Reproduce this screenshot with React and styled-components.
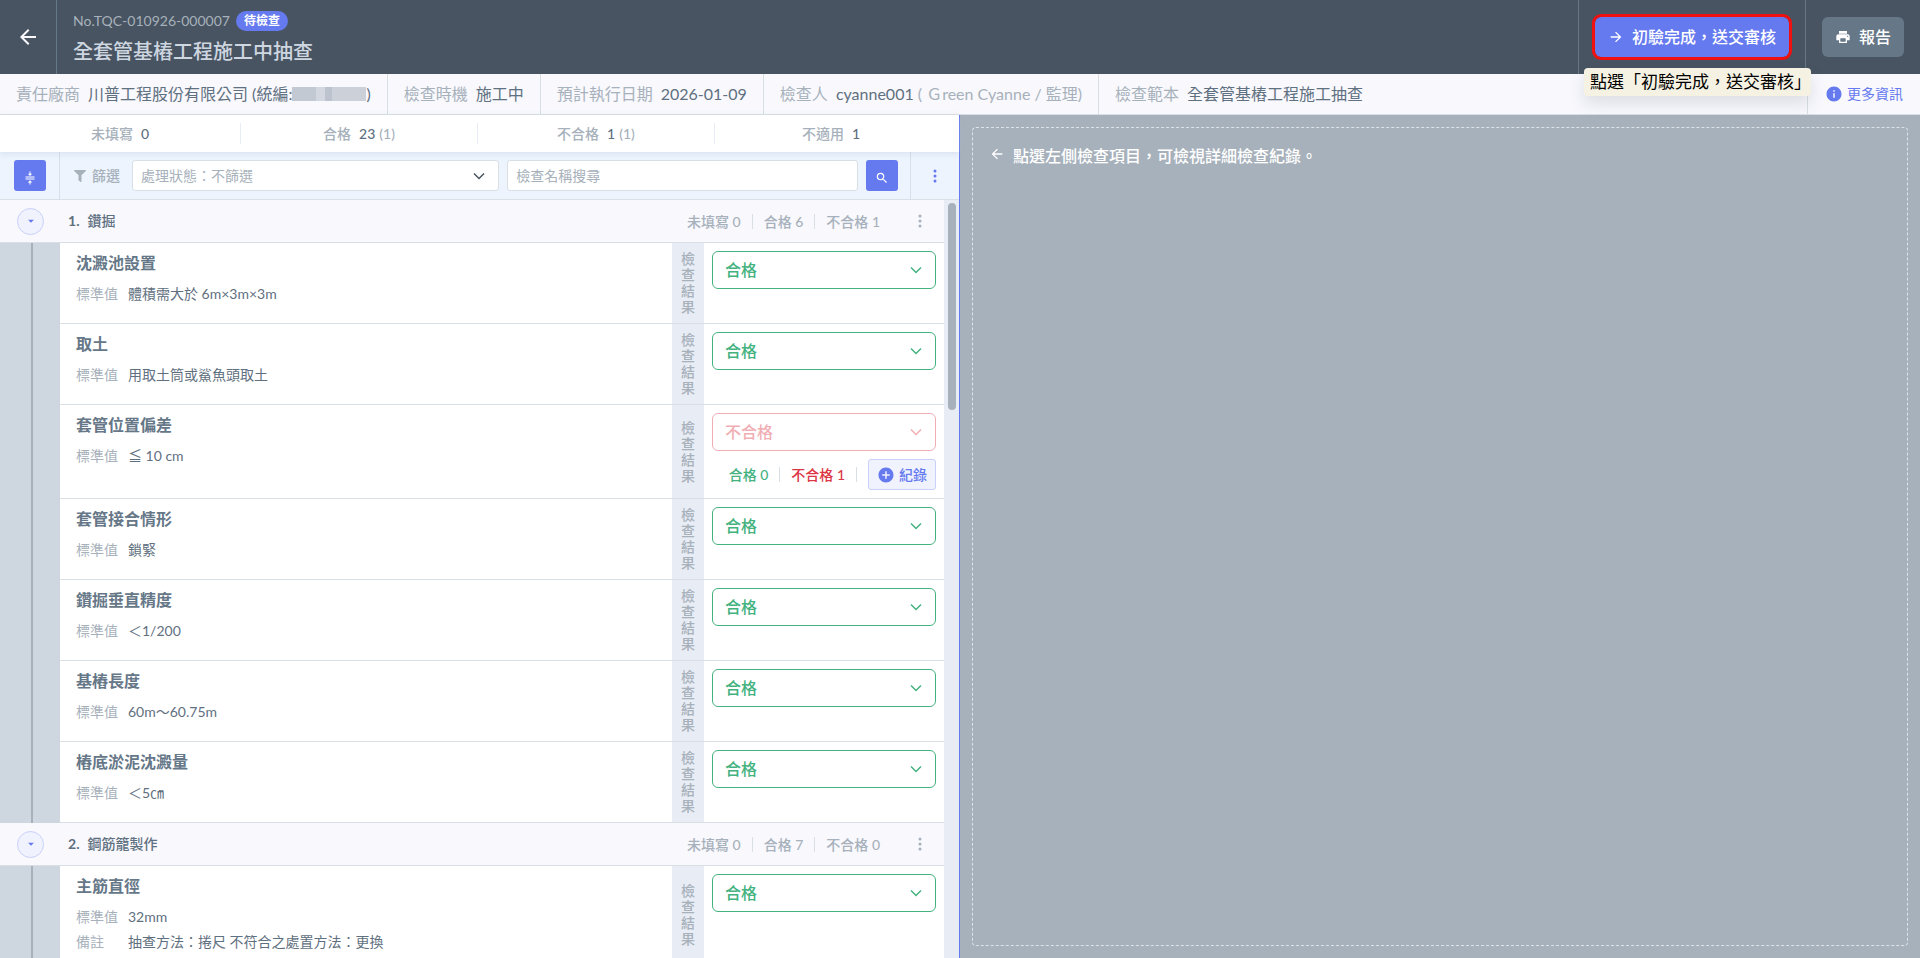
import React from 'react'
import styled, { createGlobalStyle } from 'styled-components'
import { MdArrowBack, MdArrowForward, MdPrint, MdInfo, MdAddCircle, MdSearch, MdArrowDropDown } from 'react-icons/md'
import { FaFilter } from 'react-icons/fa'

const colors = {
  dark: '#485461',
  slate: '#667788',
  text: '#5f7080',
  muted: '#a7b1bb',
  line: '#d8dfe5',
  rail: '#ced6e0',
  strip: '#e8ecf4',
  light: '#f8f8fd',
  filter: '#edf4fe',
  primary: '#667aef',
  green: '#44b27f',
  red: '#dc3545',
}

const GlobalStyle = createGlobalStyle`
  * {
    box-sizing: border-box;
  }

  body {
    margin: 0;
    color: ${colors.text};
    font: 14px/20px Lato, "Noto Sans CJK TC", sans-serif;
  }

  button, input, select {
    font: inherit;
    margin: 0;
  }

  h1, h2, h3, p, dl, dt, dd, ul {
    font: inherit;
    margin: 0;
    padding: 0;
  }
`

const Page = styled.div`
  display: flex;
  flex-direction: column;
  height: 100vh;
  overflow: hidden;
`

const Header = styled.header`
  background-color: ${colors.dark};
  display: flex;
  flex: none;
  height: 74px;
`

const BackButton = styled.button`
  align-items: center;
  background: none;
  border: 0;
  border-right: 1px solid ${colors.slate};
  color: ${colors.light};
  display: flex;
  font-size: 24px;
  justify-content: center;
  width: 57px;
`

const Heading = styled.div`
  flex: 1;
  padding: 9px 16px;
`

const SerialLine = styled.div`
  align-items: center;
  color: ${colors.muted};
  display: flex;
  gap: 6px;
  height: 24px;
`

const Badge = styled.span`
  background-color: ${colors.primary};
  border-radius: 10px;
  color: white;
  font-size: 12px;
  font-weight: 700;
  padding: 0 8px;
`

const Title = styled.h1`
  color: ${colors.rail};
  font-size: 20px;
  font-weight: 500;
  line-height: 36px;
`

const HeaderCell = styled.div`
  align-items: center;
  border-left: 1px solid ${colors.slate};
  display: flex;
  padding: 0 16px;
  position: relative;
`

const HeaderButton = styled.button`
  align-items: center;
  background-color: ${props => props.$primary ? colors.primary : colors.slate};
  border: 0;
  border-radius: 6px;
  color: white;
  display: flex;
  font-size: 16px;
  font-weight: 500;
  gap: 8px;
  height: 40px;
  outline: ${props => props.$primary ? '3px solid #f01010' : 'none'};
  padding: 0 13px;
`

const Tooltip = styled.div`
  background-color: #f5f2e4;
  border-radius: 4px;
  box-shadow: 0 8px 16px rgba(72, 84, 96, .15);
  color: black;
  font-size: 17px;
  left: 5px;
  line-height: 28px;
  padding: 0 0 0 6px;
  position: absolute;
  top: 68px;
  white-space: nowrap;
  z-index: 2;
`

const InfoBar = styled.dl`
  background-color: ${colors.light};
  border-bottom: 1px solid ${colors.line};
  display: flex;
  flex: none;
  font-size: 16px;
  height: 41px;
`

const InfoCell = styled.div`
  align-items: center;
  border-right: ${props => props.$last ? 0 : 1}px solid ${colors.line};
  display: flex;
  flex: ${props => props.$last ? 1 : 'none'};
  gap: 8px;
  padding: 0 16px;
  white-space: nowrap;
`

const Term = styled.dt`
  color: ${colors.muted};
`

const Detail = styled.dd`
  align-items: center;
  display: flex;
`

const Aside = styled.span`
  color: ${colors.muted};
  white-space: pre;
`

const Redacted = styled.span`
  background: linear-gradient(90deg, #c3c9d3 0 33%, #d3d8e0 33% 45%, #bcc3ce 45% 54%, #cbd0d9 54%);
  height: 14px;
  width: 74px;
`

const MoreLink = styled.a`
  align-items: center;
  border-left: 1px solid ${colors.line};
  color: ${colors.primary};
  display: flex;
  font-size: 14px;
  gap: 4px;
  padding: 0 17px;
  text-decoration: none;
`

const Main = styled.main`
  display: flex;
  flex: 1;
  min-height: 0;
`

const LeftPane = styled.section`
  border-right: 1px solid ${colors.primary};
  display: flex;
  flex-direction: column;
  width: 50%;
`

const RightPane = styled.section`
  background-color: ${colors.muted};
  display: flex;
  padding: 12px;
  width: 50%;
`

const Placeholder = styled.div`
  border: 1px dashed #dde3e9;
  border-radius: 4px;
  color: white;
  display: flex;
  flex: 1;
  font-size: 16px;
  font-weight: 500;
  gap: 8px;
  line-height: 24px;
  padding: 16px;

  svg {
    margin-top: 2px;
  }
`

const Stats = styled.ul`
  box-shadow: 0 2px 6px rgba(166, 183, 204, .3);
  display: flex;
  flex: none;
  height: 37px;
  line-height: 22px;
  list-style: none;
  padding: 8px 8px 8px 4px;
  position: relative;
`

const Stat = styled.li`
  border-right: 1px solid ${colors.strip};
  color: ${colors.muted};
  flex: 1;
  font-weight: 500;
  text-align: center;

  &:last-child {
    border-right: 0;
  }
`

const Count = styled.span`
  color: ${colors.text};
  margin: 0 4px 0 8px;
`

const FilterBar = styled.form`
  background-color: ${colors.filter};
  border-bottom: 1px solid ${colors.line};
  display: flex;
  flex: none;
  height: 48px;
`

const FilterSide = styled.div`
  align-items: center;
  border: 0 solid ${colors.line};
  border-${props => props.$side}-width: 1px;
  display: flex;
  justify-content: center;
  width: ${props => props.$side === 'right' ? 60 : 49}px;
`

const FilterFields = styled.div`
  align-items: center;
  display: grid;
  flex: 1;
  gap: 8px;
  grid-template-columns: auto minmax(0, 22fr) minmax(0, 21fr) auto;
  padding: 0 12px 0 14px;
`

const FilterLabel = styled.label`
  align-items: center;
  color: ${colors.muted};
  display: flex;
  font-weight: 500;
  gap: 6px;
  margin-right: 4px;
`

const IconButton = styled.button`
  align-items: center;
  background-color: ${colors.primary};
  border: 0;
  border-radius: 3px;
  color: white;
  display: flex;
  flex: none;
  height: 31px;
  justify-content: center;
  padding: 4px 0 0;
  width: 32px;
`

const SelectBox = styled.div`
  color: ${props => props.$color};
  display: flex;
  opacity: ${props => props.$faded ? .4 : 1};
  position: relative;

  svg {
    pointer-events: none;
    position: absolute;
    right: 14px;
    top: calc(50% - 6px);
  }
`

const FilterSelect = styled.select`
  appearance: none;
  background-color: white;
  border: 1px solid ${colors.line};
  border-radius: 3px;
  color: ${colors.muted};
  height: 31px;
  padding: 0 8px;
  width: 100%;
`

const SearchInput = styled.input`
  background-color: white;
  border: 1px solid ${colors.line};
  border-radius: 3px;
  height: 31px;
  padding: 0 8px;

  &::placeholder {
    color: ${colors.muted};
  }
`

const ResultSelect = styled.select`
  appearance: none;
  background-color: white;
  border: 1px solid currentColor;
  border-radius: 6px;
  color: inherit;
  font-size: 16px;
  font-weight: 500;
  height: 38px;
  opacity: 1;
  padding: 0 12px;
  width: 100%;
`

const KebabButton = styled.button`
  background: none;
  border: 0;
  color: ${props => props.$color};
  display: flex;
  padding: 0;
`

const ScrollArea = styled.div`
  display: flex;
  flex: 1;
  min-height: 0;
`

const List = styled.div`
  flex: 1;
  overflow: hidden;
`

const Track = styled.div`
  background-color: ${colors.strip};
  padding: 3px 3px 0 4px;
  width: 15px;
`

const Thumb = styled.div`
  background-color: ${colors.muted};
  border-radius: 4px;
  height: 207px;
`

const GroupHeader = styled.header`
  align-items: center;
  background-color: ${colors.light};
  border-bottom: 1px solid ${colors.line};
  display: flex;
  height: 43px;
  padding: 0 22px 0 17px;
`

const ToggleButton = styled.button`
  align-items: center;
  background-color: #f0f2fe;
  border: 1px solid #c9d0fa;
  border-radius: 50%;
  color: ${colors.primary};
  display: flex;
  height: 27px;
  justify-content: center;
  margin-right: 24px;
  padding: 0;
  width: 27px;
`

const GroupName = styled.h2`
  flex: 1;
  font-weight: 500;
`

const GroupNumber = styled.span`
  font-weight: 700;
  margin-right: 8px;
`

const Tally = styled.span`
  border-right: 1px solid ${colors.line};
  color: ${props => props.$color || colors.muted};
  font-weight: 500;
  line-height: 15px;
  margin-right: 11px;
  padding-right: 11px;

  &:last-of-type {
    border-right-width: ${props => props.$closed ? 1 : 0}px;
    margin-right: ${props => props.$closed ? 11 : 27}px;
  }
`

const GroupBody = styled.div`
  display: flex;
`

const Rail = styled.div`
  background: linear-gradient(${colors.muted}, ${colors.muted}) 31px 0 / 2px 100% no-repeat ${colors.rail};
  flex: none;
  width: 60px;
`

const Items = styled.div`
  flex: 1;
`

const Item = styled.article`
  border-bottom: 1px solid ${colors.line};
  display: flex;
`

const ItemText = styled.div`
  flex: 1;
  padding: 8px 16px 10px;
`

const ItemTitle = styled.h3`
  color: ${colors.slate};
  font-size: 16px;
  font-weight: 700;
  line-height: 24px;
  margin-bottom: 6px;
`

const ItemMeta = styled.p`
  color: ${colors.text};
  display: flex;
  line-height: 25px;
`

const MetaLabel = styled.span`
  color: ${colors.muted};
  width: 52px;
`

const Strip = styled.div`
  align-items: center;
  background-color: ${colors.strip};
  color: ${colors.muted};
  display: flex;
  font-weight: 500;
  line-height: 16px;
  padding: 8px 9px;
  text-align: center;
  width: 32px;
`

const Result = styled.div`
  display: flex;
  flex-direction: column;
  gap: 8px;
  padding: 8px;
  width: 240px;
`

const Records = styled.div`
  align-items: center;
  display: flex;
  justify-content: flex-end;
`

const RecordButton = styled.button`
  align-items: center;
  background-color: #f0f2fe;
  border: 1px solid #c9d0fa;
  border-radius: 3px;
  color: ${colors.primary};
  display: flex;
  font-weight: 500;
  gap: 4px;
  height: 31px;
  padding: 0 8px;
`

const Chevron = () => (
  <svg width="12" height="12" viewBox="0 0 12 12" fill="none" stroke="currentColor" strokeWidth="1.5">
    <path d="M1 3.5l5 5 5-5" />
  </svg>
)

const Dots = () => (
  <svg width="4" height="14" viewBox="0 0 4 14" fill="currentColor">
    <circle cx="2" cy="2" r="1.5" />
    <circle cx="2" cy="7" r="1.5" />
    <circle cx="2" cy="12" r="1.5" />
  </svg>
)

const Collapse = () => (
  <svg width="10" height="14" viewBox="0 0 10 14" fill="currentColor">
    <path d="M4.500 0.500h1v2.300h1.700L5 5 2.800 2.800h1.700zM0.500 5.600h9v1H0.500zM0.500 7.600h9v1H0.500zM5 9.200l2.200 2.200H5.500v2.100h-1v-2.100H2.800z" />
  </svg>
)

const groups = [
  {
    name: '鑽掘',
    tallies: ['未填寫 0', '合格 6', '不合格 1'],
    items: [
      { title: '沈澱池設置', standard: '體積需大於 6m×3m×3m' },
      { title: '取土', standard: '用取土筒或鯊魚頭取土' },
      { title: '套管位置偏差', standard: '≦ 10 cm', failed: true },
      { title: '套管接合情形', standard: '鎖緊' },
      { title: '鑽掘垂直精度', standard: '＜1/200' },
      { title: '基樁長度', standard: '60m～60.75m' },
      { title: '樁底淤泥沈澱量', standard: '＜5㎝' },
    ],
  },
  {
    name: '鋼筋籠製作',
    tallies: ['未填寫 0', '合格 7', '不合格 0'],
    items: [
      { title: '主筋直徑', standard: '32mm', note: '抽查方法：捲尺 不符合之處置方法：更換' },
    ],
  },
]

const stats = [
  { label: '未填寫', count: 0 },
  { label: '合格', count: 23, extra: '(1)' },
  { label: '不合格', count: 1, extra: '(1)' },
  { label: '不適用', count: 1 },
]

const CheckItem = ({ title, standard, note, failed }) => (
  <Item>
    <ItemText>
      <ItemTitle>{title}</ItemTitle>
      <ItemMeta><MetaLabel>標準值</MetaLabel>{standard}</ItemMeta>
      {note && <ItemMeta><MetaLabel>備註</MetaLabel>{note}</ItemMeta>}
    </ItemText>
    <Strip>檢查結果</Strip>
    <Result>
      <SelectBox $color={failed ? colors.red : colors.green} $faded={failed}>
        <ResultSelect aria-label={title} defaultValue={failed ? '不合格' : '合格'} disabled={failed}>
          <option>合格</option>
          <option>不合格</option>
        </ResultSelect>
        <Chevron />
      </SelectBox>
      {failed && (
        <Records>
          <Tally $color={colors.green}>合格 0</Tally>
          <Tally $color={colors.red} $closed>不合格 1</Tally>
          <RecordButton type="button"><MdAddCircle size={18} />紀錄</RecordButton>
        </Records>
      )}
    </Result>
  </Item>
)

const Group = ({ index, name, tallies, items }) => (
  <section>
    <GroupHeader>
      <ToggleButton type="button" aria-label={name}><MdArrowDropDown size={14} /></ToggleButton>
      <GroupName><GroupNumber>{index}.</GroupNumber>{name}</GroupName>
      {tallies.map(tally => <Tally key={tally}>{tally}</Tally>)}
      <KebabButton type="button" aria-label="選單" $color={colors.muted}><Dots /></KebabButton>
    </GroupHeader>
    <GroupBody>
      <Rail />
      <Items>
        {items.map(item => <CheckItem key={item.title} {...item} />)}
      </Items>
    </GroupBody>
  </section>
)

export default () => (
  <Page>
    <GlobalStyle />
    <Header>
      <BackButton type="button" aria-label="返回"><MdArrowBack /></BackButton>
      <Heading>
        <SerialLine>No.TQC-010926-000007 <Badge>待檢查</Badge></SerialLine>
        <Title>全套管基樁工程施工中抽查</Title>
      </Heading>
      <HeaderCell>
        <HeaderButton type="button" $primary><MdArrowForward size={16} />初驗完成，送交審核</HeaderButton>
        <Tooltip role="tooltip">點選「初驗完成，送交審核」</Tooltip>
      </HeaderCell>
      <HeaderCell>
        <HeaderButton type="button"><MdPrint size={16} />報告</HeaderButton>
      </HeaderCell>
    </Header>
    <InfoBar>
      <InfoCell>
        <Term>責任廠商</Term>
        <Detail>川普工程股份有限公司 (統編:<Redacted />)</Detail>
      </InfoCell>
      <InfoCell><Term>檢查時機</Term><Detail>施工中</Detail></InfoCell>
      <InfoCell><Term>預計執行日期</Term><Detail>2026-01-09</Detail></InfoCell>
      <InfoCell>
        <Term>檢查人</Term>
        <Detail>cyanne001<Aside> ( Ｇreen Cyanne / 監理)</Aside></Detail>
      </InfoCell>
      <InfoCell $last><Term>檢查範本</Term><Detail>全套管基樁工程施工抽查</Detail></InfoCell>
      <MoreLink href="#more"><MdInfo size={18} />更多資訊</MoreLink>
    </InfoBar>
    <Main>
      <LeftPane>
        <Stats>
          {stats.map(({ label, count, extra }) => (
            <Stat key={label}>{label}<Count>{count}</Count>{extra}</Stat>
          ))}
        </Stats>
        <FilterBar>
          <FilterSide $side="right">
            <IconButton type="button" aria-label="收合"><Collapse /></IconButton>
          </FilterSide>
          <FilterFields>
            <FilterLabel htmlFor="status"><FaFilter size={12} />篩選</FilterLabel>
            <SelectBox $color={colors.dark}>
              <FilterSelect id="status">
                <option>處理狀態：不篩選</option>
              </FilterSelect>
              <Chevron />
            </SelectBox>
            <SearchInput aria-label="檢查名稱搜尋" placeholder="檢查名稱搜尋" />
            <IconButton type="button" aria-label="搜尋"><MdSearch size={14} /></IconButton>
          </FilterFields>
          <FilterSide $side="left">
            <KebabButton type="button" aria-label="更多" $color={colors.primary}><Dots /></KebabButton>
          </FilterSide>
        </FilterBar>
        <ScrollArea>
          <List>
            {groups.map((group, i) => <Group key={group.name} index={i + 1} {...group} />)}
          </List>
          <Track><Thumb /></Track>
        </ScrollArea>
      </LeftPane>
      <RightPane>
        <Placeholder><MdArrowBack size={16} />點選左側檢查項目，可檢視詳細檢查紀錄。</Placeholder>
      </RightPane>
    </Main>
  </Page>
)
